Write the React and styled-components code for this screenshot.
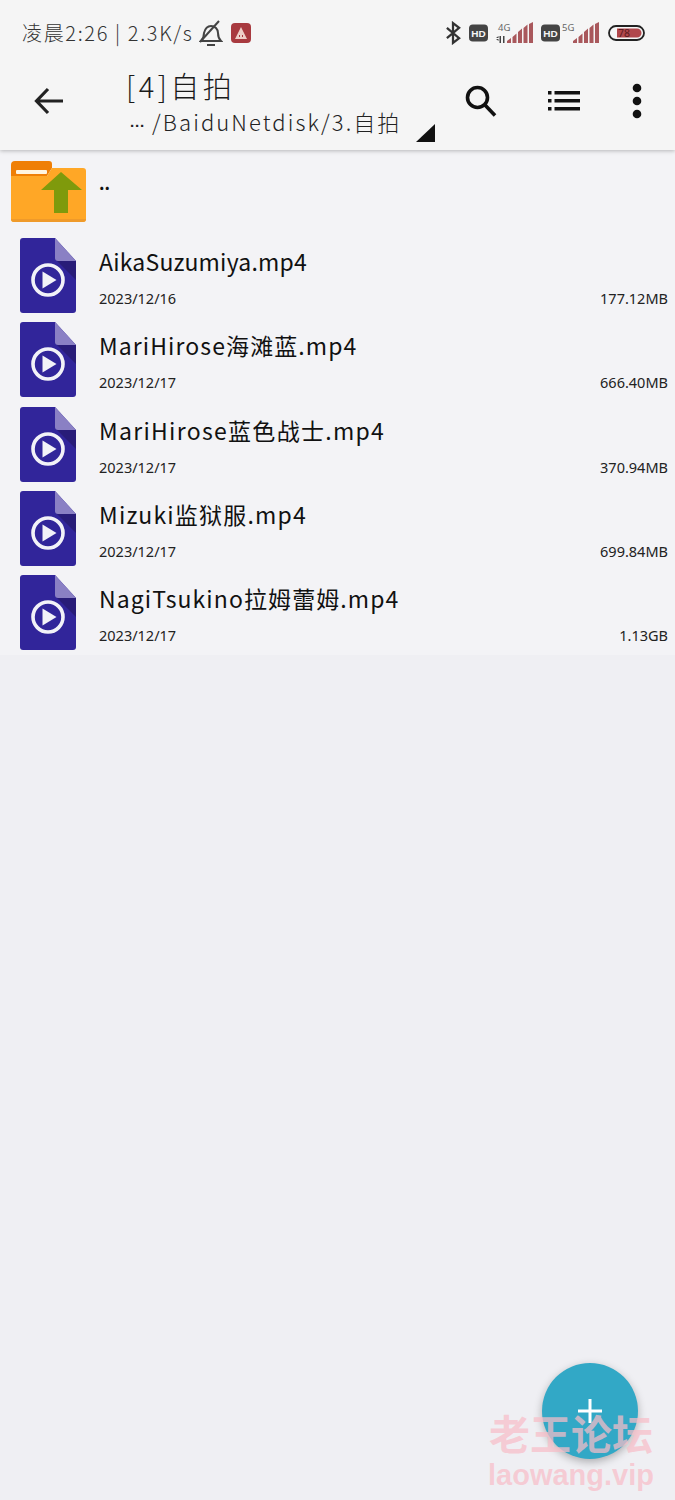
import React from "react";
import styled, { createGlobalStyle } from "styled-components";

const GlobalStyle = createGlobalStyle`
  html, body {
    margin: 0;
    padding: 0;
    background: #efeff3;
  }
  body {
    font-family: "Noto Sans CJK SC", "Noto Sans", sans-serif;
    color: #111;
  }
`;

const Page = styled.div`
  position: relative;
  width: 675px;
  height: 1500px;
  overflow: hidden;
  background: #efeff3;
`;

const Header = styled.header`
  position: relative;
  height: 150px;
  background: #f5f5f5;
  box-shadow: 0 1px 4px rgba(0, 0, 0, 0.25);
  display: flex;
  flex-direction: column;
`;

const StatusBar = styled.div`
  height: 66px;
  padding: 0 30px 0 22px;
  display: flex;
  align-items: center;
  justify-content: space-between;
`;

const StatusGroup = styled.div`
  display: flex;
  align-items: center;
  gap: ${(p) => p.$gap || 0}px;
`;

const StatusText = styled.span`
  font-size: 20px;
  font-weight: 300;
  letter-spacing: 1.65px;
  color: #333;
  line-height: 24px;
  white-space: nowrap;
`;

const AppBadge = styled.div`
  width: 20px;
  height: 20px;
  margin-left: 8px;
  border-radius: 4px;
  background: #a83a3f;
  display: flex;
  align-items: center;
  justify-content: center;
`;

const SignalIcon = styled.svg`
  margin-left: ${(p) => (p.$tight ? -6 : 0)}px;
  margin-right: ${(p) => (p.$tight ? 1 : 0)}px;
`;

const Toolbar = styled.div`
  height: 84px;
  display: flex;
  align-items: flex-start;
`;

const IconSlot = styled.div`
  width: ${(p) => p.$w}px;
  height: 70px;
  flex: none;
  display: flex;
  align-items: center;
  justify-content: center;
`;

const TitleBlock = styled.div`
  position: relative;
  width: 348px;
  height: 84px;
  flex: none;
  padding-left: 29px;
  box-sizing: border-box;
`;

const Title = styled.div`
  font-size: 29px;
  font-weight: 300;
  line-height: 38px;
  letter-spacing: 3.5px;
  color: #1a1a1a;
`;

const Path = styled.div`
  font-size: 22px;
  font-weight: 300;
  line-height: 34px;
  letter-spacing: 2.1px;
  padding-left: 4px;
  color: #222;
  white-space: nowrap;
`;

const Dots = styled.span`
  font-family: "Liberation Sans", sans-serif;
  font-size: 15px;
  font-weight: 700;
  letter-spacing: 0;
  margin-right: 7px;
`;

const Corner = styled.div`
  position: absolute;
  right: 10px;
  top: 58px;
  width: 0;
  height: 0;
  border-style: solid;
  border-width: 0 0 18px 19px;
  border-color: transparent transparent #111 transparent;
`;

const List = styled.div`
  display: flex;
  flex-direction: column;
  padding-bottom: 4px;
  background: #f3f3f6;
`;

const ParentRow = styled.div`
  height: 80px;
  padding: 10px 0 0 11px;
  box-sizing: border-box;
  display: flex;
  align-items: flex-start;
`;

const ParentLabel = styled.div`
  margin: 11px 0 0 13px;
  font-size: 17px;
  line-height: 24px;
  font-weight: 700;
`;

const Row = styled.div`
  height: 84.3px;
  padding: 8px 7px 0 20px;
  box-sizing: border-box;
  display: flex;
  align-items: flex-start;
`;

const RowBody = styled.div`
  flex: 1;
  margin-left: 23px;
  min-width: 0;
  padding-top: 7px;
`;

const FileName = styled.div`
  font-size: 23px;
  font-weight: 400;
  line-height: 32px;
  letter-spacing: ${(p) => p.$spacing}px;
  color: #111;
  white-space: nowrap;
`;

const Meta = styled.div`
  margin-top: 12px;
  display: flex;
  justify-content: space-between;
  font-family: "Noto Sans", sans-serif;
  font-size: 14.5px;
  font-weight: 400;
  line-height: 18px;
  color: #222;
`;

const Fab = styled.div`
  position: absolute;
  left: 542px;
  top: 1363px;
  width: 96px;
  height: 96px;
  border-radius: 50%;
  background: #32a8c6;
  box-shadow: 0 3px 8px rgba(0, 0, 0, 0.28);
  display: flex;
  align-items: center;
  justify-content: center;
`;

const Watermark = styled.div`
  position: absolute;
  left: 486px;
  top: 1408px;
  width: 170px;
  display: flex;
  flex-direction: column;
  align-items: center;
  color: rgba(248, 190, 200, 0.72);
  font-weight: 700;
`;

const WatermarkCn = styled.div`
  font-family: "Noto Sans CJK SC", sans-serif;
  font-size: 41px;
  line-height: 48px;
  white-space: nowrap;
`;

const WatermarkEn = styled.div`
  font-family: "Liberation Sans", sans-serif;
  font-size: 29px;
  line-height: 30px;
  margin-top: 4px;
  white-space: nowrap;
`;

const files = [
  { name: "AikaSuzumiya.mp4", date: "2023/12/16", size: "177.12MB", spacing: 0.2 },
  { name: "MariHirose海滩蓝.mp4", date: "2023/12/17", size: "666.40MB", spacing: 1.1 },
  { name: "MariHirose蓝色战士.mp4", date: "2023/12/17", size: "370.94MB", spacing: 1.3 },
  { name: "Mizuki监狱服.mp4", date: "2023/12/17", size: "699.84MB", spacing: 1.2 },
  { name: "NagiTsukino拉姆蕾姆.mp4", date: "2023/12/17", size: "1.13GB", spacing: 1.1 },
];

const BellOff = () => (
  <svg width="24" height="27" viewBox="0 0 24 27" fill="none" stroke="#444" strokeWidth="2" style={{ marginLeft: 5 }}>
    <path d="M2 21h20c-2-2-3-4-3-8 0-4-3-7-7-7S6 9 5 13c0 3-1 6-3 8z" />
    <path d="M8 25h8" />
    <path d="M1 22L20 1" />
  </svg>
);

const Bluetooth = () => (
  <svg width="16" height="24" viewBox="0 0 17 24" fill="none" stroke="#333" strokeWidth="2.4">
    <path d="M2 6.500l13 11-6.500 5V1.500l6.500 5-13 11" />
  </svg>
);

const HdBadge = () => (
  <svg width="19" height="18" viewBox="0 0 20 18">
    <rect width="20" height="18" rx="4" fill="#444" />
    <text x="10" y="13" textAnchor="middle" fill="#f5f5f5" fontSize="10.500" fontWeight="700" fontFamily="Liberation Sans">HD</text>
  </svg>
);

const Signal = ({ label, traffic }) => (
  <SignalIcon $tight={!traffic} width="37" height="22" viewBox="0 0 37 22">
    <text x={traffic ? 2 : 0} y="9" fill="#666" fontSize="9.500" fontFamily="Noto Sans">{label}</text>
    {traffic && <path d="M0 16l2.500-2v2zM0 17h2.500v2zM3.500 14h1.500v7H3.500zM7 14h1.500v7H7z" fill="#444" />}
    <path d="M11 21v-2l4-3v5zM16.500 21v-6l4-3.500V21zM22 21V10l4-3.500V21zM27.500 21V6l4-3.500V21zM33 21V2l4-2v21z" fill="#a9585c" />
  </SignalIcon>
);

const Battery = () => (
  <svg width="37" height="16" viewBox="0 0 37 16">
    <rect x="1" y="1" width="35" height="14" rx="7" fill="none" stroke="#222" strokeWidth="1.800" />
    <path d="M9 3.500h20a4.500 4.500 0 0 1 0 9H9z" fill="#b1474c" />
    <text x="10" y="12" fill="#5a1a1e" fontSize="10.500" fontFamily="Noto Sans">78</text>
  </svg>
);

const BackIcon = () => (
  <svg width="30" height="28" viewBox="0 0 30 28" fill="none" stroke="#222" strokeWidth="3.200">
    <path d="M29 14H3M14 2L2.500 14 14 26" />
  </svg>
);

const SearchIcon = () => (
  <svg width="32" height="32" viewBox="0 0 32 32" fill="none" stroke="#111" strokeWidth="3.600">
    <circle cx="12.500" cy="12.500" r="10" />
    <path d="M20 20l10 10.500" />
  </svg>
);

const ListIcon = () => (
  <svg width="32" height="20" viewBox="0 0 32 20" fill="#111">
    <path d="M0 0h3.500v3.500H0zM0 8h3.500v3.500H0zM0 16h3.500v3.500H0zM6.500 0H32v3.500H6.500zM6.500 8H32v3.500H6.500zM6.500 16H32v3.500H6.500z" />
  </svg>
);

const MoreIcon = () => (
  <svg width="10" height="36" viewBox="0 0 10 36" fill="#111">
    <circle cx="5" cy="5" r="4.300" />
    <circle cx="5" cy="18" r="4.300" />
    <circle cx="5" cy="31" r="4.300" />
  </svg>
);

const FolderUp = () => (
  <svg width="75" height="62" viewBox="0 0 75 62">
    <path d="M0 5a4 4 0 0 1 4-4h34a3 3 0 0 1 3 3v4l-5 8H0z" fill="#ef7f06" />
    <path d="M0 16h36l5-8h31a3 3 0 0 1 3 3v48a3 3 0 0 1-3 3H3a3 3 0 0 1-3-3z" fill="#ffa726" />
    <path d="M0 59h75a3 3 0 0 1-3 3H3a3 3 0 0 1-3-3z" fill="#ef9a2a" />
    <rect x="5" y="10" width="31" height="4" rx="1" fill="#fff4e0" />
    <path d="M50 12l21 18H57v23H43V30H30z" fill="#7f9a0c" />
  </svg>
);

const VideoFile = () => (
  <svg width="56" height="75" viewBox="0 0 56 75">
    <path d="M3 0h32l21 23v49a3 3 0 0 1-3 3H3a3 3 0 0 1-3-3V3a3 3 0 0 1 3-3z" fill="#31259a" />
    <path d="M35 21l21 21V23z" fill="#281c78" />
    <path d="M35 0l21 23H38a3 3 0 0 1-3-3z" fill="#8a80c4" />
    <circle cx="28" cy="42" r="15" fill="none" stroke="#f2f2f8" strokeWidth="3.600" />
    <path d="M22.500 33.500L36.500 42l-14 8.500z" fill="#f2f2f8" />
  </svg>
);

const PlusIcon = () => (
  <svg width="24" height="24" viewBox="0 0 24 24" stroke="#fff" strokeWidth="3">
    <path d="M12 0v24M0 12h24" />
  </svg>
);

const App = () => (
  <Page>
    <GlobalStyle />
    <Header>
      <StatusBar>
        <StatusGroup>
          <StatusText>凌晨2:26 | 2.3K/s</StatusText>
          <BellOff />
          <AppBadge>
            <svg width="14" height="14" viewBox="0 0 14 14" fill="#eecfc8">
              <path d="M7 1l6 12H1zM5 9h1v2H5zM8 9h1v2H8z" fillRule="evenodd" />
            </svg>
          </AppBadge>
        </StatusGroup>
        <StatusGroup $gap={8}>
          <Bluetooth />
          <HdBadge />
          <Signal label="4G" traffic />
          <HdBadge />
          <Signal label="5G" />
          <Battery />
        </StatusGroup>
      </StatusBar>
      <Toolbar>
        <IconSlot $w={97}>
          <BackIcon />
        </IconSlot>
        <TitleBlock>
          <Title>[4]自拍</Title>
          <Path>
            <Dots>···</Dots>/BaiduNetdisk/3.自拍
          </Path>
          <Corner />
        </TitleBlock>
        <IconSlot $w={72}>
          <SearchIcon />
        </IconSlot>
        <IconSlot $w={94}>
          <ListIcon />
        </IconSlot>
        <IconSlot $w={52}>
          <MoreIcon />
        </IconSlot>
      </Toolbar>
    </Header>
    <List>
      <ParentRow>
        <FolderUp />
        <ParentLabel>..</ParentLabel>
      </ParentRow>
      {files.map((file) => (
        <Row key={file.name}>
          <VideoFile />
          <RowBody>
            <FileName $spacing={file.spacing}>{file.name}</FileName>
            <Meta>
              <span>{file.date}</span>
              <span>{file.size}</span>
            </Meta>
          </RowBody>
        </Row>
      ))}
    </List>
    <Fab>
      <PlusIcon />
    </Fab>
    <Watermark>
      <WatermarkCn>老王论坛</WatermarkCn>
      <WatermarkEn>laowang.vip</WatermarkEn>
    </Watermark>
  </Page>
);

export default App;
